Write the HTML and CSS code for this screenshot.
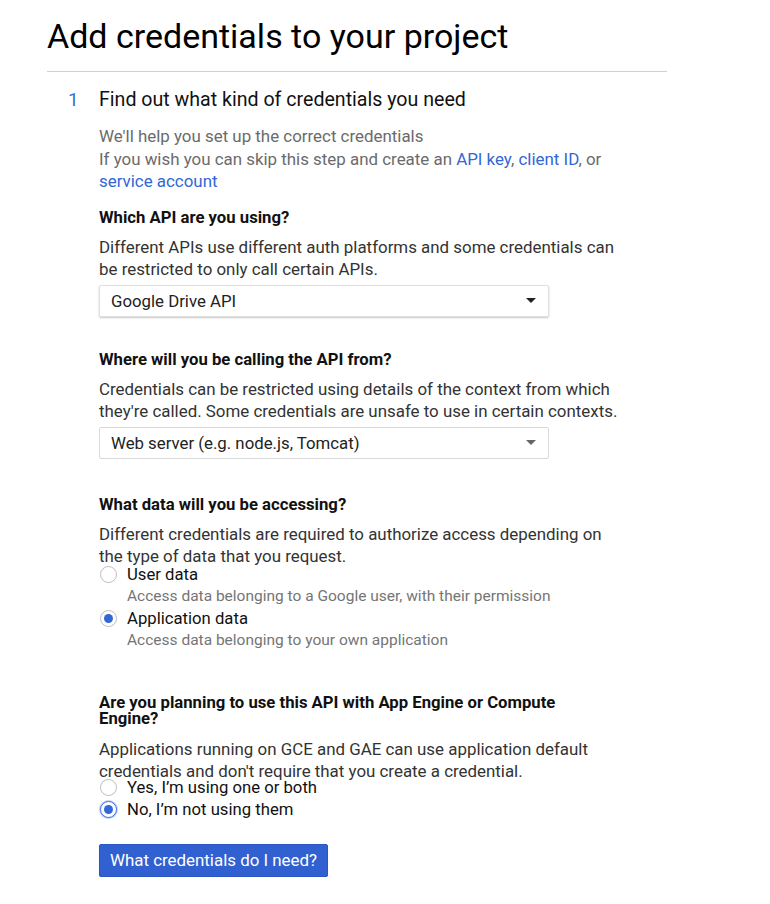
FILE: index.html
```html
<!DOCTYPE html>
<html>
<head>
<meta charset="utf-8">
<link rel="stylesheet" href="styles.css">
</head>
<body>
<div class="page">
  <h1 class="title">Add credentials to your project</h1>
  <div class="rule"></div>
  <div class="step">
    <div class="step-num">1</div>
    <div class="step-body">
      <div class="step-title">Find out what kind of credentials you need</div>
      <p class="intro">We'll help you set up the correct credentials<br>If you wish you can skip this step and create an <a href="#">API key</a>, <a href="#">client ID</a>, or <a href="#">service account</a></p>

      <div class="q q-first">
        <div class="q-title">Which API are you using?</div>
        <p class="q-desc">Different APIs use different auth platforms and some credentials can be restricted to only call certain APIs.</p>
        <div class="select raised"><span>Google Drive API</span><span class="arrow"></span></div>
      </div>

      <div class="q">
        <div class="q-title">Where will you be calling the API from?</div>
        <p class="q-desc">Credentials can be restricted using details of the context from which they're called. Some credentials are unsafe to use in certain contexts.</p>
        <div class="select"><span>Web server (e.g. node.js, Tomcat)</span><span class="arrow light"></span></div>
      </div>

      <div class="q q-data">
        <div class="q-title">What data will you be accessing?</div>
        <p class="q-desc">Different credentials are required to authorize access depending on the type of data that you request.</p>
        <div class="radios">
          <div class="radio-item">
            <div class="radio-row"><span class="radio"></span><span class="radio-label">User data</span></div>
            <div class="radio-sub">Access data belonging to a Google user, with their permission</div>
          </div>
          <div class="radio-item">
            <div class="radio-row"><span class="radio checked"></span><span class="radio-label">Application data</span></div>
            <div class="radio-sub">Access data belonging to your own application</div>
          </div>
        </div>
      </div>

      <div class="q q-last">
        <div class="q-title tight">Are you planning to use this API with App Engine or Compute Engine?</div>
        <p class="q-desc desc2">Applications running on GCE and GAE can use application default credentials and don't require that you create a credential.</p>
        <div class="radios">
          <div class="radio-row small"><span class="radio"></span><span class="radio-label">Yes, I’m using one or both</span></div>
          <div class="radio-row small"><span class="radio checked focus"></span><span class="radio-label">No, I’m not using them</span></div>
        </div>
      </div>

      <button class="btn">What credentials do I need?</button>
    </div>
  </div>
</div>
</body>
</html>
```

FILE: styles.css
```css
html, body {
  margin: 0;
  padding: 0;
  background: #fff;
}
body {
  font-family: Roboto, "Liberation Sans", Arial, sans-serif;
  color: #212121;
}
.page {
  padding-left: 47px;
  width: 620px;
}
.title {
  margin: 16px 0 0 0;
  font-size: 34px;
  font-weight: 400;
  line-height: 40px;
  color: #000;
}
.rule {
  margin-top: 15px;
  height: 1px;
  background: #cfcfcf;
}
.step {
  display: flex;
  margin-top: 16px;
}
.step-num {
  width: 52px;
  padding-left: 21px;
  box-sizing: border-box;
  font-size: 19px;
  line-height: 24px;
  color: #3b6fd8;
}
.step-body {
  width: 522px;
}
.step-title {
  font-size: 19.6px;
  line-height: 24px;
  color: #111;
}
.intro {
  margin: 13px 0 0 0;
  font-size: 16.9px;
  line-height: 22.5px;
  color: #6b6b6b;
}
.intro a {
  color: #3367d6;
  text-decoration: none;
}
.q {
  margin-top: 32px;
}
.q-first {
  margin-top: 14px;
}
.q.q-data {
  margin-top: 35px;
}
.q-title {
  max-width: 500px;
  font-size: 16.7px;
  font-weight: 700;
  line-height: 22px;
  color: #111;
}
.q-title.tight {
  line-height: 16.5px;
}
.q-desc {
  margin: 7px 0 0 0;
  font-size: 16.9px;
  line-height: 22.5px;
  color: #333;
}
.desc2 {
  margin-top: 10px;
}
.select {
  margin-top: 4px;
  width: 450px;
  height: 32px;
  box-sizing: border-box;
  border: 1px solid #d9d9d9;
  border-radius: 2px;
  display: flex;
  align-items: center;
  justify-content: space-between;
  padding: 0 11px 0 11px;
  font-size: 16.8px;
  color: #222;
}
.select.raised {
  box-shadow: 0 1px 2px rgba(0,0,0,0.22);
  border-color: #e0e0e0;
}
.arrow {
  width: 0;
  height: 0;
  border-left: 5px solid transparent;
  border-right: 5px solid transparent;
  border-top: 5px solid #222;
  margin-right: 1px;
}
.arrow.light {
  border-top-color: #666;
}
.radios {
  display: flex;
  flex-direction: column;
}
.radio-item {
  display: flex;
  flex-direction: column;
}
.radio-item + .radio-item {
  margin-top: 1px;
}
.radio-row {
  display: flex;
  align-items: center;
  height: 22px;
  margin-top: -6px;
}
.radio-item .radio-row {
  margin-top: 0;
}
.radio-item:first-child .radio-row {
  margin-top: -4px;
}
.radio-row.small + .radio-row.small {
  margin-top: 0;
}
.radio {
  width: 17px;
  height: 17px;
  box-sizing: border-box;
  border-radius: 50%;
  border: 1px solid #bdbdbd;
  background: #fff;
  margin-left: 1px;
  margin-right: 10px;
  position: relative;
  flex-shrink: 0;
}
.radio.checked::after {
  content: "";
  position: absolute;
  left: 3px;
  top: 3px;
  width: 9px;
  height: 9px;
  border-radius: 50%;
  background: #3367d6;
}
.radio.focus {
  border: 1.5px solid #3d6ce0;
  box-shadow: 0 0 0 1px rgba(80,130,230,0.35);
}
.radio.focus::after {
  left: 2.5px;
  top: 2.5px;
}
.radio-label {
  font-size: 16.7px;
  color: #111;
}
.radio-sub {
  margin-left: 28px;
  font-size: 15.5px;
  line-height: 21px;
  color: #757575;
}
.q-last {
  margin-top: 44px;
}
.btn {
  margin-top: 23px;
  height: 33px;
  width: 229px;
  background: #3160d0;
  color: #fff;
  border: 1px solid #2a55c2;
  border-radius: 2px;
  font-family: Roboto, "Liberation Sans", Arial, sans-serif;
  font-size: 16.9px;
  padding: 0;
  box-shadow: 0 1px 1px rgba(0,0,0,0.15);
}
```
